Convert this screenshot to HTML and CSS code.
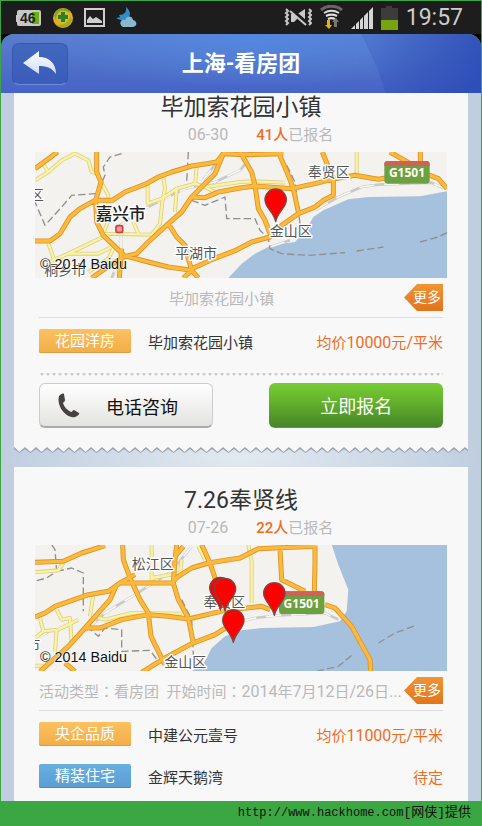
FILE: index.html
```html
<!DOCTYPE html>
<html lang="zh-CN">
<head>
<meta charset="utf-8">
<meta name="viewport" content="width=device-width, initial-scale=1">
<title>上海-看房团</title>
<link rel="stylesheet" href="styles.css">
</head>
<body>
<div class="screen">
  <div class="status">
    <div class="status-left">
      <svg width="26" height="18" viewBox="0 0 26 18" aria-hidden="true">
        <path d="M3 1h20a2 2 0 0 1 2 2v12a2 2 0 0 1-2 2H3a2 2 0 0 1-2-2v-2H0V6h1V3a2 2 0 0 1 2-2z" fill="#c8c8c8"/>
        <path d="M16 3h7v12h-7z" fill="#6fae12"/>
        <text x="4" y="14" class="charge">46</text>
      </svg>
      <svg width="22" height="22" viewBox="0 0 22 22" aria-hidden="true">
        <circle cx="11" cy="11" r="10" fill="#e3ad1b"/>
        <path d="M2 8A10 10 0 0 1 19 5C13 3 5 5 4 13z" fill="#75a72c"/>
        <path d="M20 13A10 10 0 0 1 4 18c7 1 12-2 14-9z" fill="#a0ac22"/>
        <circle cx="11" cy="10" r="6.5" fill="#d9b92e"/>
        <path d="M9 5h4v3h3v4h-3v3H9v-3H6V8h3z" fill="#2f7f25"/>
      </svg>
      <svg width="21" height="19" viewBox="0 0 21 19" aria-hidden="true">
        <path d="M1 1h19v17H1z" fill="none" stroke="#cfcfcf" stroke-width="2"/>
        <path d="M3 15v-3l3-4 3 3 3-2 6 4v2z" fill="#cfcfcf"/>
      </svg>
      <svg width="22" height="21" viewBox="0 0 22 21" aria-hidden="true">
        <path d="M11 0c5 4 5 9 1 12-4 2-8 1-11-1 2 0 4-1 4-1l-1-2c5 0 8-3 7-8z" fill="#2e8fc6"/>
        <path d="M8 20a4 4 0 0 1-1-7c2-1 3 0 3 0 1-4 7-5 8 0 5 1 4 7 0 7z" fill="#86b9d0"/>
      </svg>
    </div>
    <div class="status-right">
      <svg width="28" height="20" viewBox="0 0 28 20" aria-hidden="true">
        <path d="M2 1l2 2-2 2 2 2-2 2 2 2-2 2 2 2-2 2M25 1l2 2-2 2 2 2-2 2 2 2-2 2 2 2-2 2" fill="none" stroke="#c9c9c9" stroke-width="2"/>
        <path d="M7 6h3l3 3v2l-3 3H7zM12 7l9-6v13z" fill="#c9c9c9"/>
        <path d="M7 1l16 14" stroke="#1d1d1d" stroke-width="3"/>
        <path d="M6 3l16 14" stroke="#c9c9c9" stroke-width="2"/>
      </svg>
      <svg width="23" height="25" viewBox="0 0 23 25" aria-hidden="true">
        <path d="M1 5C7 0 16 0 22 5" fill="none" stroke="#666" stroke-width="3"/>
        <path d="M4 8c5-3 10-3 15 0M6 11c4-2 7-2 11 0M8 14c2-1 5-1 7 0" fill="none" stroke="#ddd" stroke-width="2"/>
        <path d="M7 15h3v5h2l-3 4-4-4h2z" fill="#e6b012"/>
        <path d="M14 22v-5h-2l4-4 3 4h-2v5z" fill="#777"/>
      </svg>
      <svg width="22" height="22" viewBox="0 0 22 22" aria-hidden="true">
        <path d="M0 22l4-4v4zM5 17l3-3v8H5zM9 13l3-3v12H9zM13 9l4-4v17h-4zM18 4l4-4v22h-4z" fill="#d5d5d5"/>
      </svg>
      <svg width="17" height="24" viewBox="0 0 17 24" aria-hidden="true">
        <path d="M5 0h6v2h6v12H0V2h5z" fill="#3c3c3c"/>
        <path d="M0 14h17v10H0z" fill="#77a40d"/>
      </svg>
      <time class="clock">19:57</time>
    </div>
  </div>

  <header class="nav">
    <svg class="nav-shade" viewBox="0 0 120 59" preserveAspectRatio="none" aria-hidden="true">
      <defs><linearGradient id="shade"><stop offset="0" stop-color="#2546b3" stop-opacity=".15"/><stop offset="1" stop-color="#2546b3" stop-opacity=".75"/></linearGradient></defs>
      <path d="M0 0h120v59H24C19 37 9 18 0 0z" fill="url(#shade)"/>
    </svg>
    <button class="back" type="button" aria-label="返回">
      <svg width="34" height="24" viewBox="0 0 34 24" aria-hidden="true">
        <defs><linearGradient id="arrow" x2="0" y2="1"><stop offset="0" stop-color="#fff"/><stop offset="1" stop-color="#cfdcf8"/></linearGradient></defs>
        <path d="M0 12L16 0v6c10 0 17 6 17 17-4-6-9-8-17-8v8z" fill="url(#arrow)"/>
      </svg>
    </button>
    <h1>上海-看房团</h1>
  </header>

  <main class="feed">
    <article class="card card-first">
      <h2>毕加索花园小镇</h2>
      <p class="meta"><span>06-30</span><span><b>41人</b>已报名</span></p>
      <svg class="map" viewBox="30 20 1236 378" role="img" aria-label="毕加索花园小镇地图">
        <defs>
          <g id="pin"><path d="M0 64C-6 34-32 22-32-2a32 32 0 0 1 64 0C32 22 6 34 0 64z"/></g>
          <g id="a-minor">
            <path d="M30 105L70 80 110 45 150 25 190 45 200 80 218 84M50 50L70 80M228 110L250 150V225L235 265 380 268 405 235 412 170 420 130 415 95M368 120V175L410 160 455 130 510 115 540 125 645 110 690 108 780 112M455 130L450 200M515 60L510 120M325 230L340 265M255 265L130 325 60 355M70 295L90 350M130 325H220L270 300 250 340 190 380M995 20V90M540 125L580 145"/>
          </g>
          <g id="a-major">
            <path d="M30 70L98 20M215 20V80L228 110 212 165 215 230 235 270 295 328M30 287H75L105 265 135 215 165 190 210 165H262L300 140 365 115 400 95 440 80 500 62 545 55 575 50 595 25 660 28 775 25M595 25L570 85 500 155 470 200 430 235 370 290 335 325 295 335M500 155L540 157 580 140 645 128 690 122 800 130 870 115 930 100 990 90 1020 95 1060 102 1100 95 1215 90 1240 100 1266 130M645 20L680 80 690 120 700 190 720 225 737 270M760 20L790 90 805 130 820 200M500 370L560 343 630 316 680 290 735 275 770 240 820 205 870 185 895 165 925 150V100L908 60 892 20M430 235L455 275 480 300 490 340 500 375 520 398M295 330L370 350 430 365 500 375 475 398M295 335L240 370 200 398M290 310L283 398M1095 20L1165 60M1186 20V65"/>
          </g>
        </defs>
        <rect class="land" x="30" y="20" width="1236" height="378"/>
        <path class="sea" d="M610 398L650 355 690 325 740 300 810 290 845 250 865 215 895 195 970 162 1030 155 1185 153 1266 138V398z"/>
        <path class="rail" d="M270 250L360 190 480 130 570 110 645 75 690 20M735 305L795 285M870 195L940 155 1010 125 1060 118 1220 112 1255 128M288 265V330L260 398M530 110L580 45"/>
        <path class="rail-dash" d="M270 250L360 190 480 130 570 110 645 75 690 20M735 305L795 285M870 195L940 155 1010 125 1060 118 1220 112 1255 128M288 265V330L260 398M530 110L580 45"/>
        <path class="bound" d="M290 25L255 35 235 65 240 90 215 145 140 150 110 185 60 240 30 170M490 20L485 110M500 165L540 180 600 155 605 220 690 220 705 255 730 280 735 310 770 325 850 330 960 322M995 317L1075 305M1185 290L1240 275 1266 262M785 60L810 110 825 235"/>
        <use href="#a-minor" class="minor-case"/><use href="#a-minor" class="minor"/>
        <use href="#a-major" class="major-case"/><use href="#a-major" class="major"/>
        <rect x="273" y="241" width="20" height="20" rx="5" fill="#f4a0a0" stroke="#d13c3c" stroke-width="5"/>
        <text class="city" x="212" y="224">嘉兴市</text>
        <text class="place" x="450" y="339">平湖市</text>
        <text class="place" x="848" y="95">奉贤区</text>
        <text class="place" x="14" y="164">区</text>
        <text class="place" x="58" y="388">桐乡市</text>
        <text class="place" x="734" y="273">金山区</text>
        <text class="copyright" x="45" y="370">© 2014 Baidu</text>
        <rect x="1078" y="47" width="136" height="68" rx="10" fill="#6da140"/>
        <path d="M1078 61v-4a10 10 0 0 1 10-10h116a10 10 0 0 1 10 10v4z" fill="#d0605a"/>
        <text class="highway" x="1146" y="95">G1501</text>
        <use href="#pin" class="pin" x="752" y="165"/>
      </svg>
      <div class="details">
        <div class="summary"><p class="center">毕加索花园小镇</p><a class="more" href="#more-1">更多</a></div>
        <ul class="homes">
          <li><span class="tag">花园洋房</span><span class="name">毕加索花园小镇</span><span class="price">均价<span class="num">10000</span>元<span class="num">/</span>平米</span></li>
        </ul>
        <div class="actions">
          <button class="call" type="button">
            <svg width="22" height="26" viewBox="0 0 22 26" aria-hidden="true"><path d="M1 3C3 1 5 0 6 1l1 6c0 2-2 2-2 3 1 4 4 7 8 9 1 0 2-2 3-2l5 3c1 1-1 3-4 4C9 26-2 14 1 3z" fill="#454241"/></svg>
            <span>电话咨询</span>
          </button>
          <button class="join" type="button">立即报名</button>
        </div>
      </div>
      <svg class="edge" width="100%" height="6" aria-hidden="true">
        <defs><pattern id="zigzag" width="11" height="6" patternUnits="userSpaceOnUse"><path d="M0 2L5.500 6 11 2V0H0z" fill="#93a0ae"/><path d="M0 0L5.500 5 11 0z" fill="#f8f8f8"/></pattern></defs>
        <rect width="100%" height="6" fill="url(#zigzag)"/>
      </svg>
    </article>

    <article class="card">
      <h2>7.26奉贤线</h2>
      <p class="meta"><span>07-26</span><span><b>22人</b>已报名</span></p>
      <svg class="map" viewBox="30 16 1236 378" role="img" aria-label="7.26奉贤线地图">
        <defs>
          <g id="b-minor"><path d="M30 98L100 92 115 70M205 165L195 230M95 210L110 240 135 235 140 310M45 235L55 275 100 270 160 240M220 235L240 240 320 220 470 222M95 270L90 335M380 15V130M520 20L540 60M670 15L680 65V190M470 60L465 100 380 115M30 378H60M55 275L30 295"/></g>
          <g id="b-major"><path d="M30 68L115 65 170 40 240 18M293 15L295 60 315 115 345 180 370 220 378 290 400 335 420 375M30 232L60 220 90 200 190 165 250 155 285 130 330 105M285 130H440L460 110 500 85 550 70 645 55 700 27 870 20M275 135L255 180 180 265 130 320 45 395M180 265H225L290 240 370 225 430 230 490 238 600 212 710 200 735 210M445 130L460 180 490 235 505 310M530 15L555 70 575 130 600 200M455 15L450 60 445 130M475 20L450 50M350 398L420 355 500 312 570 285 610 260M765 25L770 120 840 155M870 18V75L868 160M900 195L930 205 980 260 1035 360 1037 395M120 370L150 395"/></g>
        </defs>
        <rect class="land" x="30" y="16" width="1236" height="378"/>
        <path class="sea" d="M920 15L940 75 970 150 965 215 945 245 865 262 710 265 650 272 600 290 560 325 540 365 500 395H1266V15z"/>
        <path class="rail" d="M180 275L240 220 330 165 440 95 500 20M650 245L690 235 750 228 900 220 940 240M30 300L80 270"/>
        <path class="rail-dash" d="M180 275L240 220 330 165 440 95 500 20M650 245L690 235 750 228 900 220 940 240M30 300L80 270"/>
        <path class="bound" d="M80 15L90 30 95 95 65 115 35 123M95 95L140 85 175 100V215M185 260L220 290 240 265 290 270V335L375 332 400 365M470 180L500 240 505 345M875 395L940 380 980 347M1060 310L1110 280 1170 258"/>
        <use href="#b-minor" class="minor-case"/><use href="#b-minor" class="minor"/>
        <use href="#b-major" class="major-case"/><use href="#b-major" class="major"/>
        <text class="place" x="320" y="89">松江区</text>
        <text class="place" x="535" y="203">奉贤区</text>
        <text class="place" x="418" y="382">金山区</text>
        <text class="place" x="4" y="331">市</text>
        <text class="copyright" x="45" y="368">© 2014 Baidu</text>
        <rect x="762" y="155" width="136" height="68" rx="10" fill="#6da140"/>
        <path d="M762 169v-4a10 10 0 0 1 10-10h116a10 10 0 0 1 10 10v4z" fill="#d0605a"/>
        <text class="highway" x="830" y="204">G1501</text>
        <use href="#pin" class="pin" x="586" y="147"/>
        <use href="#pin" class="pin" x="600" y="150"/>
        <use href="#pin" class="pin" x="625" y="244"/>
        <use href="#pin" class="pin" x="748" y="163"/>
      </svg>
      <div class="details">
        <div class="summary"><p>活动类型<span class="colon" lang="zh-TW">：</span>看房团&nbsp; 开始时间<span class="colon" lang="zh-TW">：</span><span class="num">2014</span>年<span class="num">7</span>月<span class="num">12</span>日<span class="num">/26</span>日<span class="num">...</span></p><a class="more" href="#more-2">更多</a></div>
        <ul class="homes">
          <li><span class="tag">央企品质</span><span class="name">中建公元壹号</span><span class="price">均价<span class="num">11000</span>元<span class="num">/</span>平米</span></li>
          <li><span class="tag tag-blue">精装住宅</span><span class="name">金辉天鹅湾</span><span class="price">待定</span></li>
        </ul>
      </div>
    </article>
  </main>
  <footer class="source">http://www.hackhome.com<span>[网侠]提供</span></footer>
</div>
</body>
</html>
```

FILE: styles.css
```css
* { box-sizing: border-box; }

body {
  margin: 0;
  font-family: Roboto, "Noto Sans CJK SC", sans-serif;
  font-size: 15px;
  color: #333;
  background: #3aa742;
}

h1, h2, p, ul { margin: 0; padding: 0; font-weight: 400; }
ul { list-style: none; }
svg { display: block; flex: none; }
button { font: inherit; cursor: pointer; }

.screen {
  display: flex;
  flex-direction: column;
  min-height: 100vh;
  padding: 1px 1px 0;
  background: #3aa742;
}

/* Status bar */
.status {
  position: relative;
  z-index: 1;
  display: flex;
  justify-content: space-between;
  height: 33px;
  padding: 0 18px 0 15px;
  background: #1d1d1d;
}
.status-left, .status-right { display: flex; align-items: center; }
.status-left { gap: 10px; }
.status-right { gap: 8px; }
.clock { font-size: 23px; line-height: 32px; color: #ccc; }
.charge { font: bold 14px "Liberation Sans", sans-serif; fill: #222; }

/* Title bar */
.nav {
  position: relative;
  display: grid;
  grid-template-columns: 56px 1fr 56px;
  align-items: center;
  height: 59px;
  padding: 0 11px;
  overflow: hidden;
  border-radius: 13px 13px 0 0;
  background: radial-gradient(ellipse at 52% 0, #5388e0 0, rgba(83, 136, 224, 0) 65%), linear-gradient(#5c7dcc, #4564c6);
  box-shadow: 0 -14px 0 0 #000;
}
.nav-shade { position: absolute; top: 0; right: 0; width: 25%; height: 100%; }
.nav h1 {
  text-align: center;
  font-size: 22px;
  line-height: 32px;
  font-weight: 700;
  color: #fff;
}
.back {
  display: grid;
  place-items: center;
  width: 56px;
  height: 42px;
  padding: 0 0 2px;
  border: 1px solid #3557ad;
  border-bottom-color: #6d8ddc;
  border-radius: 7px;
  background: linear-gradient(#4168bd, #3b5cba);
}

/* Cards */
.feed {
  display: flex;
  flex: 1;
  flex-direction: column;
  gap: 20px;
  padding: 0 13px;
  background: radial-gradient(ellipse 50% 60px at 50% 364px, #e2eaf0, rgba(226, 234, 240, 0)), #c0cee0;
}
.card { padding: 20px 21px 3px; background: #f8f8f8; }
.card:last-child { flex: 1; }
.card-first { position: relative; padding-top: 1px; padding-bottom: 0; }
.card h2 { text-align: center; font-size: 23px; line-height: 28px; }
.meta {
  display: flex;
  justify-content: center;
  gap: 28px;
  padding: 1px 0 5px 39px;
  line-height: 24px;
  color: #b9b9b9;
}
.meta span:first-child { font-size: 16px; }
.meta b { font-weight: 500; color: #ed6d1f; }
.details { padding: 0 4px; }
.summary {
  display: flex;
  align-items: center;
  height: 40px;
  border-bottom: 1px solid #dedede;
  color: #b9b9b9;
}
.summary p { flex: 1; min-width: 0; overflow: hidden; white-space: nowrap; }
.summary .center { text-align: center; }
.colon { font-family: "Noto Sans CJK TC", sans-serif; }
.num { font-size: 16px; }
.more {
  width: 39px;
  padding-left: 9px;
  font-size: 14px;
  line-height: 27px;
  color: #fff;
  text-decoration: none;
  background: linear-gradient(#f19336, #e2751c);
  clip-path: polygon(0 50%, 13px 0, 100% 0, 100% 100%, 13px 100%);
}
.homes { padding-top: 2px; }
.homes li { display: flex; align-items: center; height: 42px; }
.tag {
  width: 92px;
  margin-right: 17px;
  text-align: center;
  line-height: 24px;
  color: #fff;
  border-radius: 2px;
  background: linear-gradient(#fcc160, #f2ad47);
  box-shadow: inset 0 -1px 0 #dc9c40;
}
.tag-blue { background: linear-gradient(#68afe0, #5a9dd4); box-shadow: inset 0 -1px 0 #4c8abe; }
.name { flex: 1; }
.price { color: #ed6d1f; }

.actions {
  display: flex;
  justify-content: space-between;
  margin-top: 11px;
  padding: 10px 0 19px;
  background: radial-gradient(circle at 3px 1px, #ccc 1px, transparent 2px) 0 0 / 6px 3px repeat-x;
}
.call, .join { width: 43%; height: 45px; border-radius: 6px; font-size: 18px; }
.call {
  display: flex;
  align-items: center;
  gap: 26px;
  padding: 2px 0 0 18px;
  color: #111;
  border: 1px solid #ccc;
  border-bottom: 2px solid #aaa;
  background: linear-gradient(#fff, #e3e3e1);
}
.join {
  padding: 0;
  color: #fff;
  border: 0;
  border-bottom: 1px solid #6d8b58;
  background: linear-gradient(#77cc35, #65b42c 40%, #47852a);
}
.edge { position: absolute; left: 0; top: 100%; }

/* Maps */
.map { width: 100%; height: auto; overflow: hidden; }
.land { fill: #f4f2ee; }
.sea { fill: #a6c1de; }
.map path, .map use { stroke-linejoin: round; }
.rail { fill: none; stroke: #c9c9c9; stroke-width: 8; }
.rail-dash { fill: none; stroke: #f8f8f8; stroke-width: 5; stroke-dasharray: 45 30; }
.bound { fill: none; stroke: #8f8f8f; stroke-width: 4; stroke-dasharray: 22 10; }
.minor-case { fill: none; stroke: #d9cf8c; stroke-width: 12; }
.minor { fill: none; stroke: #fbf3a0; stroke-width: 7; }
.major-case { fill: none; stroke: #d99428; stroke-width: 15; }
.major { fill: none; stroke: #fdb93a; stroke-width: 10; }
.pin { fill: #f00; stroke: #7d4545; stroke-width: 4; }
.city, .place, .copyright { paint-order: stroke; stroke: #fff; stroke-width: 8px; stroke-linejoin: round; }
.city { font: 500 50px "Noto Sans CJK SC", sans-serif; fill: #222; }
.place { font: 42px "Noto Sans CJK SC", sans-serif; fill: #555; }
.copyright { font: 43px "Liberation Sans", sans-serif; fill: #111; stroke-width: 3px; }
.highway { font: bold 36px "Noto Sans", sans-serif; fill: #fff; text-anchor: middle; }

.source {
  height: 25px;
  padding-right: 10px;
  text-align: right;
  font-family: "Liberation Mono", "Noto Sans CJK SC", monospace;
  font-size: 12px;
  line-height: 23px;
  color: #111;
}
.source span { font-size: 13px; }
```
